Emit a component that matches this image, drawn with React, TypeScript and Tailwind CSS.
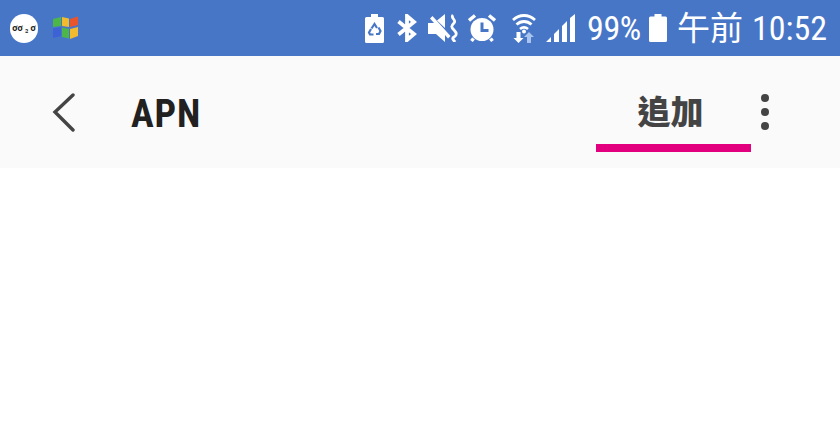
// App.tsx
const sans = "font-['Roboto','Noto_Sans_CJK_TC',sans-serif]";

const BatterySaver = () => (
  <svg width="19" height="29" viewBox="0 0 19 29" className="shrink-0">
    <path d="M6 0h7v3h4.500a1.500 1.500 0 0 1 1.500 1.500V27.500a1.500 1.500 0 0 1-1.500 1.500H1.500A1.500 1.500 0 0 1 0 27.500V4.500A1.500 1.500 0 0 1 1.500 3H6z" fill="#fff" />
    <g fill="none" stroke="#4876c7" strokeWidth="2.200">
      <path d="M6.500 14.500l3-4.500 2.500 4" />
      <path d="M13.500 13.500l2 3.500-1.500 3h-3" />
      <path d="M8.500 20.500H5l-1-2 2-3.500" />
    </g>
  </svg>
);

const Bluetooth = () => (
  <svg width="20" height="28" viewBox="0 0 20 28" className="ml-[13px] shrink-0">
    <path d="M1.500 7.500L17 20l-7 6V2l7 6L1.500 20.500" fill="none" stroke="#fff" strokeWidth="3.800" />
  </svg>
);

const MuteVibrate = () => (
  <svg width="31" height="28" viewBox="0 0 31 28" className="ml-[11px] shrink-0">
    <path d="M0 9h6L2 4.500 4.500 2l18 20-2.500 2.500-3-3.500v7l-9-8H0zM9 6.500L17 0v14z" fill="#fff" />
    <path d="M25 1c-3 3 4 5 1 8s-3 4 0 7 3 5 0 7 0 3 1 5" fill="none" stroke="#fff" strokeWidth="2.800" />
  </svg>
);

const Alarm = () => (
  <svg width="28" height="28" viewBox="0 0 28 28" className="ml-[9px] shrink-0">
    <circle cx="14" cy="15.500" r="11.500" fill="#fff" />
    <path d="M1 6.500L7 1.500M27 6.500L21 1.500M5.500 24.500L3.500 27M22.500 24.500L24.500 27" stroke="#fff" strokeWidth="3.400" fill="none" />
    <path d="M14 8.500V16.500H20.500" stroke="#4876c7" strokeWidth="3" fill="none" />
  </svg>
);

const WifiArrows = () => (
  <svg width="24" height="29" viewBox="0 0 24 29" className="ml-4 shrink-0">
    <g fill="none" stroke="#fff" strokeWidth="2.800">
      <path d="M1 6C7.500 0 16.500 0 23 6" />
      <path d="M4.500 10.500C9 6.500 15 6.500 19.500 10.500" />
      <path d="M8 15c2.500-2 5.500-2 8 0" />
    </g>
    <circle cx="12" cy="17.500" r="2" fill="#fff" />
    <path d="M4.500 18h4v6h3l-5 5-5-5h3z" fill="#fff" />
    <path d="M17 18l5 5h-3v6h-4v-6h-3z" fill="#a9c4ef" />
  </svg>
);

const Signal = () => (
  <svg width="29" height="28" viewBox="0 0 29 28" className="ml-2.5 shrink-0">
    <path d="M0 28L5 23V28zM8 28V20L13 15V28zM16 28V12L21 7V28zM24 28V4L29 0V28z" fill="#fff" />
  </svg>
);

const Battery = () => (
  <svg width="18" height="28" viewBox="0 0 18 28" className="ml-2 shrink-0">
    <path d="M5.500 0h7v2.500h4A1.500 1.500 0 0 1 18 4v22.500a1.500 1.500 0 0 1-1.500 1.500h-15A1.500 1.500 0 0 1 0 26.500V4a1.500 1.500 0 0 1 1.500-1.500h4z" fill="#fff" />
  </svg>
);

const WindowsFlag = () => (
  <svg width="25" height="25" viewBox="0 0 25 25" className="ml-[15px] shrink-0">
    <path d="M0 3l8-2v9l-8 1z" fill="#4cb748" />
    <path d="M9 1l7 1.500V11l-7-1z" fill="#f2bb2f" />
    <path d="M17 3l8-2.500V9l-8 2z" fill="#e8552d" />
    <path d="M0 12.500l8-1.500v9l-8 2z" fill="#3d62d6" />
    <path d="M9 11.500l7 1.500v9.500L9 21z" fill="#4cb748" />
    <path d="M17 13l8-2v9l-8 3z" fill="#f2bb2f" />
  </svg>
);

const App = () => {
  return (
    <div className={`w-[840px] h-[440px] overflow-hidden flex flex-col bg-white ${sans}`}>
      <div className="h-[56px] bg-[#4876c7] flex items-center shrink-0 pl-2.5 pr-3">
        <div className="w-[28px] h-[29px] rounded-full bg-white flex items-center justify-center shrink-0 text-[9px] font-bold leading-none text-[#222] whitespace-nowrap">
          ơơ ₃ ơ
        </div>
        <WindowsFlag />
        <div className="flex items-center ml-auto">
          <BatterySaver />
          <Bluetooth />
          <MuteVibrate />
          <Alarm />
          <WifiArrows />
          <Signal />
          <span className="ml-3 w-[54px] text-[34px] leading-none text-white whitespace-nowrap [font-stretch:85%] tracking-[-0.4px]">99%</span>
          <Battery />
          <span className="ml-2.5 text-[33px] leading-none text-white whitespace-nowrap">午前</span>
          <span className="ml-[9px] w-[76px] text-[34px] leading-none text-white whitespace-nowrap [font-stretch:85%]">10:52</span>
        </div>
      </div>
      <div className="h-[112px] bg-[#fafafa] flex items-stretch shrink-0">
        <div className="w-[131px] flex items-center pl-[52px] shrink-0">
          <svg width="24" height="40" viewBox="0 0 24 40">
            <path d="M21 3L3 20l18 18" fill="none" stroke="#444" strokeWidth="3.400" strokeLinecap="round" />
          </svg>
        </div>
        <div className="flex-1 flex items-center pt-[4px] text-[38px] font-bold text-[#212121] leading-none [font-stretch:85%] tracking-[0.8px]">APN</div>
        <div className="w-[155px] flex flex-col shrink-0">
          <div className="flex-1 flex items-center justify-center text-[33px] font-black text-[#444] leading-none pt-[32px] pr-[6px] pb-[8px]">
            追加
          </div>
          <div className="h-2 bg-[#e2007f] mb-4" />
        </div>
        <div className="w-[89px] flex flex-col items-start justify-center gap-[6px] pl-2.5 shrink-0">
          <div className="w-2 h-2 rounded-full bg-[#444]" />
          <div className="w-2 h-2 rounded-full bg-[#444]" />
          <div className="w-2 h-2 rounded-full bg-[#444]" />
        </div>
      </div>
      <div className="flex-1 bg-white" />
    </div>
  );
};

export default App;
